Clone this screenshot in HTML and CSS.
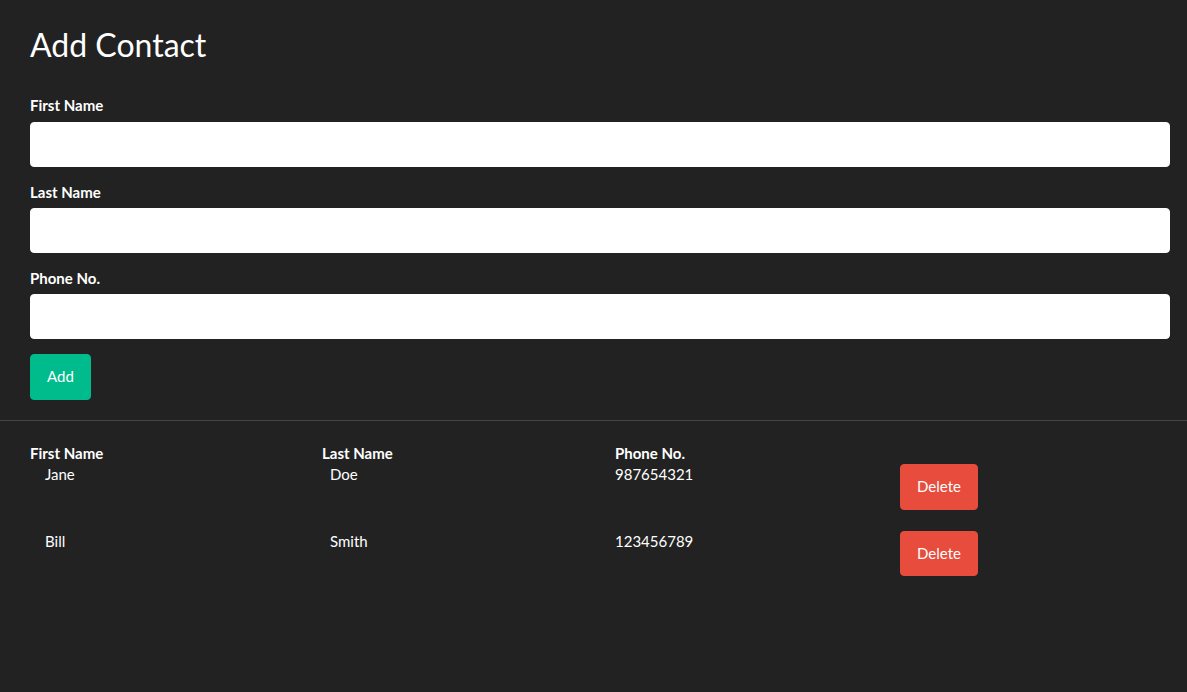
FILE: index.html
```html
<!DOCTYPE html>
<html lang="en">
<head>
<meta charset="utf-8">
<title>Add Contact</title>
<link rel="stylesheet" href="styles.css">
</head>
<body>
<div class="container">
  <h1 class="title">Add Contact</h1>
  <form class="contact-form">
    <div class="form-group">
      <label class="form-label" for="first">First Name</label>
      <input class="form-control" id="first" type="text">
    </div>
    <div class="form-group">
      <label class="form-label" for="last">Last Name</label>
      <input class="form-control" id="last" type="text">
    </div>
    <div class="form-group">
      <label class="form-label" for="phone">Phone No.</label>
      <input class="form-control" id="phone" type="text">
    </div>
    <button type="button" class="btn btn-success">Add</button>
  </form>
</div>
<hr class="divider">
<div class="container">
  <div class="list-head">
    <div class="head-cell">First Name</div>
    <div class="head-cell">Last Name</div>
    <div class="head-cell">Phone No.</div>
    <div class="head-cell"></div>
  </div>
  <div class="list-body">
    <div class="list-row">
      <div class="cell">Jane</div>
      <div class="cell">Doe</div>
      <div class="cell">987654321</div>
      <div class="cell"><button type="button" class="btn btn-danger">Delete</button></div>
    </div>
    <div class="list-row">
      <div class="cell">Bill</div>
      <div class="cell">Smith</div>
      <div class="cell">123456789</div>
      <div class="cell"><button type="button" class="btn btn-danger">Delete</button></div>
    </div>
  </div>
</div>
</body>
</html>
```
FILE: styles.css
```css
* { box-sizing: border-box; }

html, body {
  margin: 0;
  padding: 0;
  background: #222222;
  color: #ffffff;
  font-family: Lato, "Liberation Sans", sans-serif;
  font-size: 15px;
  line-height: 1.42857;
}

.container {
  padding: 0 17px 0 30px;
}

.title {
  margin: 27px 0 33px;
  font-size: 32px;
  font-weight: 400;
  line-height: 1.1;
}

.contact-form {
  display: flex;
  flex-direction: column;
  align-items: flex-start;
}

.form-group {
  width: 100%;
  margin-bottom: 15px;
}

.form-label {
  display: block;
  font-weight: 700;
  margin-bottom: 5px;
}

.form-control {
  display: block;
  width: 100%;
  height: 45px;
  border: 1px solid #ffffff;
  border-radius: 4px;
  background: #ffffff;
  font-family: inherit;
  font-size: 15px;
  padding: 10px 15px;
}

.btn {
  font-family: inherit;
  font-size: 15px;
  line-height: 1.42857;
  color: #ffffff;
  padding: 11px 16px;
  border: 1px solid transparent;
  border-radius: 4px;
  cursor: pointer;
}

.btn-success { background: #00bc8c; border-color: #00bc8c; }
.btn-danger { background: #e74c3c; border-color: #e74c3c; }

.divider {
  margin: 20px 0 22px;
  border: 0;
  border-top: 1px solid #464545;
}

.list-head {
  display: grid;
  grid-template-columns: 292px 293px 285px 1fr;
  font-weight: 700;
}

.list-body {
  display: flex;
  flex-direction: column;
  gap: 21px;
}

.list-row {
  display: grid;
  grid-template-columns: 285px 285px 285px 285px;
  align-items: start;
}

.cell {
  padding-left: 15px;
}
```
